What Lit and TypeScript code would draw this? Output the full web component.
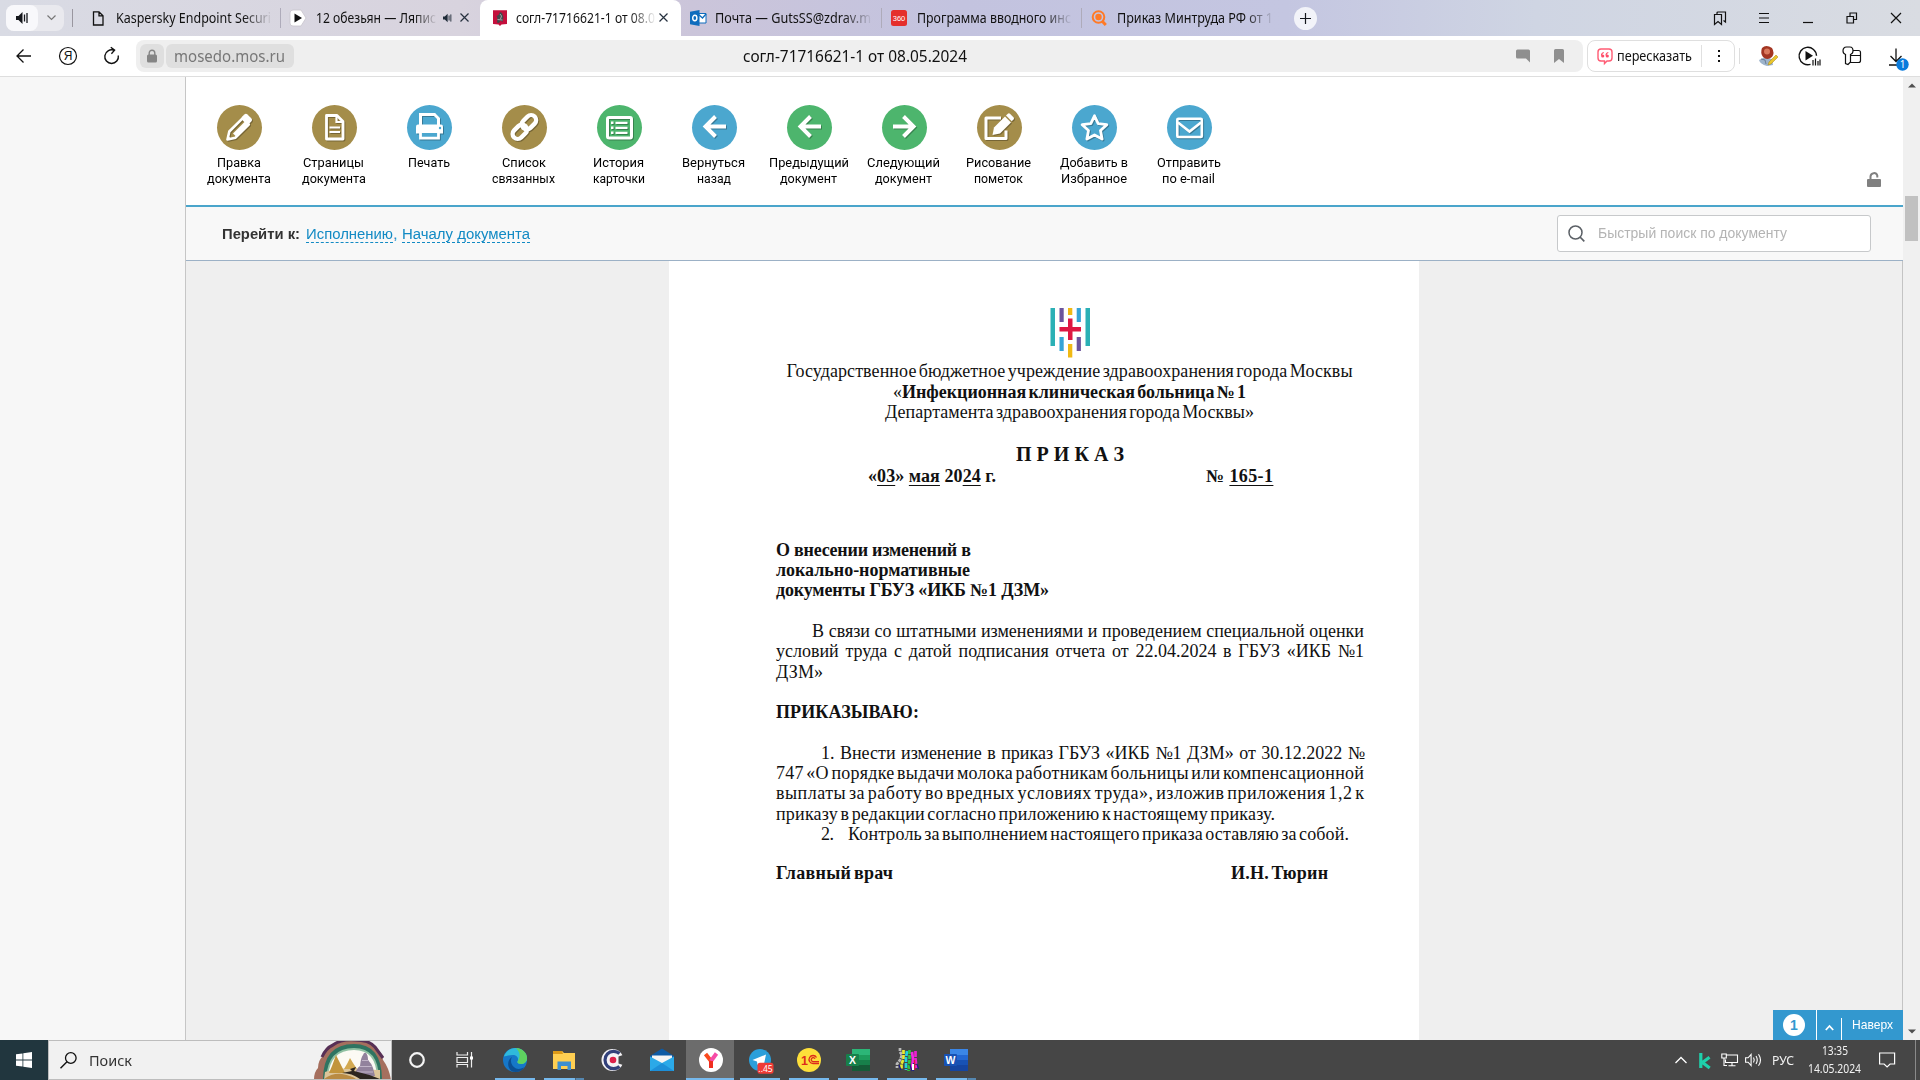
import { LitElement, html, svg, css, nothing } from "lit";
import { customElement, property } from "lit/decorators.js";

/** A single line of text fitted to a given width by scale, letter spacing or word spacing. */
@customElement("fit-text")
class FitText extends LitElement {
  @property({ type: Number }) w = 0;
  @property() mode: "scale" | "space" | "word" = "scale";
  static styles = css`
    :host { display: inline-block; white-space: pre; text-align: left; flex: none; }
    span { display: inline-block; transform-origin: 0 50%; }
  `;
  render() {
    return html`<span><slot></slot></span>`;
  }
  async firstUpdated() {
    this.fit();
    await document.fonts.ready;
    this.fit();
  }
  fit() {
    const s = this.renderRoot.querySelector("span") as HTMLElement;
    s.style.transform = "none";
    s.style.letterSpacing = "0px";
    if (this.mode === "word") s.style.wordSpacing = "0px";
    const nat = s.getBoundingClientRect().width;
    this.style.width = `${this.w}px`;
    if (!nat) return;
    const text = this.textContent || "";
    if (this.mode === "space") {
      s.style.letterSpacing = `${(this.w - nat) / Math.max(1, text.length - 1)}px`;
    } else if (this.mode === "word") {
      s.style.wordSpacing = `${(this.w - nat) / Math.max(1, text.split(" ").length - 1)}px`;
    } else {
      s.style.transform = `scaleX(${this.w / nat})`;
    }
  }
}

const fit = (text: string, w: number) => html`<fit-text .w=${w}>${text}</fit-text>`;
const sp = (content: unknown, w: number) => html`<fit-text .w=${w} mode="space">${content}</fit-text>`;
const tight = (content: unknown, w: number) => html`<fit-text class="tight" .w=${w} mode="space">${content}</fit-text>`;
const word = (content: unknown, w: number) => html`<fit-text .w=${w} mode="word">${content}</fit-text>`;

/* ---------- toolbar glyphs, 45x45 box ---------- */
const toolIcons: Record<string, unknown> = {
  pencil: svg`<path d="M10.500 34.500l1.800-8 13.200-13.200 6.200 6.200-13.200 13.200z" fill="none" stroke="#fff" stroke-width="2.600" stroke-linejoin="round"/><path d="M24.500 12.300l2.800-2.800q1.600-1.400 3.200 0l3.800 3.800q1.400 1.600 0 3.200l-2.800 2.800z" fill="#fff"/><path d="M17.500 30l12-12" stroke="#fff" stroke-width="4.200"/><path d="M9.800 35l1-4.500 3.500 3.500z" fill="#fff"/>`,
  pages: svg`<path d="M14.500 10.500h10.500l6 6v17.500h-16.500z" fill="none" stroke="#fff" stroke-width="2.800" stroke-linejoin="round"/><path d="M24.500 11v6h6.500M17.500 22.500h10.500M17.500 27h10.500" fill="none" stroke="#fff" stroke-width="2.200"/>`,
  print: svg`<path d="M13.500 20v-10.500h14l4 4v6.500" fill="none" stroke="#fff" stroke-width="3"/><path d="M11 19.500h23q2 0 2 2v7h-27v-7q0-2 2-2z" fill="#fff"/><path d="M13.500 26.500h18v6.700h-18z" fill="#4ba7cf" stroke="#fff" stroke-width="2.800"/><circle cx="33" cy="23" r="1.200" fill="#4ba7cf"/>`,
  link: svg`<g fill="none" stroke="#fff" stroke-width="4.400"><rect x="-8" y="-5" width="16" height="10" rx="5" transform="translate(17.800 26.800) rotate(-45)"/><rect x="-8" y="-5" width="16" height="10" rx="5" transform="translate(27 17.200) rotate(-45)"/></g>`,
  list: svg`<rect x="10.500" y="12.500" width="24" height="20.500" rx="1.500" fill="none" stroke="#fff" stroke-width="3"/><path d="M18.500 17.800h12M18.500 22.800h12M18.500 27.800h12" stroke="#fff" stroke-width="2.200"/><path d="M14 17.800h2.500M14 22.800h2.500M14 27.800h2.500" stroke="#fff" stroke-width="2.500"/>`,
  left: svg`<path d="M34 21.500h-20M23.500 11.500l-10 10 10 10" fill="none" stroke="#fff" stroke-width="4"/>`,
  right: svg`<path d="M11 21.500h20M21.500 11.500l10 10-10 10" fill="none" stroke="#fff" stroke-width="4"/>`,
  draw: svg`<path d="M24 13h-15v20.500h20v-8" fill="none" stroke="#fff" stroke-width="3" stroke-linejoin="round"/><path d="M15.500 30l1.500-7.500 11-11 6 6-11 11z" fill="#fff"/><path d="M29 10.500l1.800-1.800q1-1 2.200 0l3.500 3.500q1 1.200 0 2.200l-1.800 1.800z" fill="#fff"/>`,
  star: svg`<path d="M22.500 10.800l3.700 7.800 8.600 1.100-6.300 5.900 1.600 8.400-7.600-4.100-7.600 4.100 1.600-8.400-6.300-5.900 8.600-1.100z" fill="none" stroke="#fff" stroke-width="2.800" stroke-linejoin="round"/>`,
  mail: svg`<rect x="10.300" y="13.800" width="24.500" height="18.200" rx="1" fill="none" stroke="#fff" stroke-width="2.600"/><path d="M11 17.500l11.500 9 11.500-9" fill="none" stroke="#fff" stroke-width="2.600"/>`,
};

const tools: [string, string, [string, number][]][] = [
  ["pencil", "gold", [["Правка", 44], ["документа", 64]]],
  ["pages", "gold", [["Страницы", 61], ["документа", 64]]],
  ["print", "blue", [["Печать", 42]]],
  ["link", "gold", [["Список", 44], ["связанных", 63]]],
  ["list", "green", [["История", 51], ["карточки", 52]]],
  ["left", "blue", [["Вернуться", 63], ["назад", 34]]],
  ["left", "green", [["Предыдущий", 80], ["документ", 57]]],
  ["right", "green", [["Следующий", 73], ["документ", 57]]],
  ["draw", "gold", [["Рисование", 65], ["пометок", 49]]],
  ["star", "blue", [["Добавить в", 68], ["Избранное", 66]]],
  ["mail", "blue", [["Отправить", 64], ["по e-mail", 53]]],
];

/* ---------- tab favicons, 16x16 ---------- */
const icon = (w: number, h: number, body: unknown, cls = "") =>
  html`<svg class="ic ${cls}" width=${w} height=${h} viewBox="0 0 ${w} ${h}">${body}</svg>`;

const favs = {
  file: svg`<path d="M3.500 1.800h5.500l4 4v9.200h-9.500zM9 1.800v4h4" fill="none" stroke="#111" stroke-width="1.300"/>`,
  play: svg`<path d="M3 0h8l5 8-5 8h-8q-3 0-3-3v-10q0-3 3-3z" fill="#fff" stroke="#c8c4cc" stroke-width=".8"/><path d="M4.500 3.500l7.500 4.500-7.500 4.500z" fill="#111"/>`,
  moscow: svg`<path d="M1 .3h14v13.700l-5.500 .5-1.500 1.500-1.500-1.500-5.500-.5z" fill="#c40f3c"/><path d="M5 12.500l.5-4-1-2.500 2-1 1.500-3 2 1 1.500 4-1 5-2-1.500-1.500 2.500z" fill="#43484c"/><path d="M8 4l1.500 2-1 3M5.500 9.500l5 .5" stroke="#a9b3b5" fill="none" stroke-width=".9"/>`,
  outlook: svg`<path d="M8 3.500h8v9.500h-8z" fill="#fff" stroke="#0f6cbd"/><path d="M8 4l4.500 4 3.500-4" fill="none" stroke="#0f6cbd" stroke-width="1.300"/><path d="M0 1.800l9.500-1.800v16l-9.500-1.800z" fill="#0f6cbd"/><ellipse cx="4.800" cy="8" rx="2.100" ry="2.700" fill="none" stroke="#fff" stroke-width="1.400"/>`,
  n360: svg`<rect width="16" height="16" rx="2.500" fill="#e52f2b"/><text x="8" y="10.800" text-anchor="middle" font-family="Liberation Sans" font-size="7.500" fill="#fff">360</text>`,
  lens: svg`<circle cx="7.500" cy="7" r="5.800" fill="none" stroke="#ff7a26" stroke-width="2"/><circle cx="7.500" cy="7" r="3.200" fill="#ff7a26"/><path d="M11 11l3.800 4" stroke="#ff7a26" stroke-width="3"/>`,
};
const tabs = [
  { fav: favs.file, text: "Kaspersky Endpoint Securi", w: 155, cls: "" },
  { fav: favs.play, text: "12 обезьян — Ляпис", w: 120, cls: "", sound: true, close: true },
  { fav: favs.moscow, text: "согл-71716621-1 от 08.0", w: 139, cls: "active", close: true },
  { fav: favs.outlook, text: "Почта — GutsSS@zdrav.m", w: 156, cls: "first" },
  { fav: favs.n360, text: "Программа вводного инс", w: 154, cls: "" },
  { fav: favs.lens, text: "Приказ Минтруда РФ от 1", w: 156, cls: "" },
];

/* ---------- taskbar ---------- */
const office = (dark: string, mid: string, light: string, deep: string, ch: string) => svg`
  <path d="M6 1h18v6h-18z" fill=${light}/><path d="M6 7h18v5h-18z" fill=${mid}/><path d="M6 12h18v5h-18z" fill=${dark}/><path d="M6 17h18v6h-18z" fill=${deep}/>
  <rect x="0" y="6" width="13" height="12" rx="1" fill=${dark}/>
  <text x="6.500" y="16" text-anchor="middle" font-family="Liberation Sans" font-weight="700" font-size="10.500" fill="#fff">${ch}</text>`;

const apps: { i: unknown; bar?: string; on?: boolean }[] = [
  { i: svg`<circle cx="12" cy="12" r="6.800" fill="none" stroke="#f4f4f4" stroke-width="2.200"/>` },
  { i: svg`<path d="M3.500 4v3h10.500v-3M3.500 19.500v-3h10.500v3M3.500 9.500h10.500v5h-10.500zM18 4v15.500" transform="translate(-.5 0)" fill="none" stroke="#eee" stroke-width="1.200"/><rect x="16" y="8.500" width="3" height="3" fill="#fff"/>` },
  { i: svg`<circle cx="12" cy="12" r="12" fill="#1677c8"/><path d="M.8 8.500c2-5 6.200-8.500 11.500-8.500 7 0 11.700 5 11.700 10 0 4-3 6-6 6-2.500 0-4-1-3.500-2.500 1.500-2.500 0-6.500-4.500-6.500-4 0-7.500 1-9.200 1.500z" fill="#2fb9dc"/><path d="M13 .1c6.500.4 11 5 11 9.900 0 4-3 6-6 6-2.500 0-4-1-3.500-2.500 3-4 3-9-1.500-13.400z" fill="#5fd25f"/><path d="M9 9c-2.500 4-.5 9.500 4 11.500 3 1 6.500 0 8.500-1.500-3 5-9 6.200-13 4-5-4-4-11.500.5-14z" fill="#0c4f93"/>`, bar: "full" },
  { i: svg`<path d="M1 3h9l2 2h11v16h-22z" fill="#ffcf52"/><path d="M1 3h9l1 3h-10z" fill="#dd9a18"/><path d="M5.500 22v-8.500h13.500v8.500h-3.500v-4h-6.500v4z" fill="#3d8fd0"/>`, bar: "split" },
  { i: svg`<circle cx="11.500" cy="12" r="11" fill="#f4f2f5"/><path d="M18.500 5.500a8.700 8.700 0 1 0 0 13" fill="none" stroke="#32407a" stroke-width="3.200"/><circle cx="12" cy="12" r="3.300" fill="#dc2049"/><path d="M17.500 8.500l6-2v11l-6-2z" fill="#474747"/>` },
  { i: svg`<path d="M0 8l12-7.500 12 7.500v2h-24z" fill="#0e5ba5"/><path d="M2 7.500h20v10h-20z" fill="#f5f5f5"/><path d="M0 8.500l12 6.500 12-6.500v14.500h-24z" fill="#2ba9e8"/><path d="M0 23l12-8 12 8z" fill="#1d8fd8"/>` },
  { i: svg`<circle cx="12" cy="12" r="12" fill="#fff"/><path d="M12 20v-7l-5.500-7" fill="none" stroke="#fb4a1e" stroke-width="4"/><path d="M12 13l5.500-7.500" stroke="#f64ba7" stroke-width="4"/><path d="M12 20v-7" stroke="#f02e20" stroke-width="4"/>`, bar: "wide", on: true },
  { i: svg`<circle cx="12" cy="12" r="11" fill="#2b9fda"/><path d="M4.500 12l13.500-5.500-2.500 12-4-3.500-2 2-.5-3.500z" fill="#fff"/><rect x="9.500" y="14.800" width="16" height="11" rx="2.500" fill="#ef3b36"/><text x="17.500" y="23.500" text-anchor="middle" font-family="Noto Sans" font-size="8.500" fill="#fff">..45</text>`, bar: "full" },
  { i: svg`<circle cx="12" cy="12" r="12" fill="#fddf3a"/><text x="4" y="16.500" font-family="Liberation Sans" font-weight="700" font-size="12.500" fill="#dd2b1c">1</text><path d="M19.500 9.500a4 4 0 1 0-3.500 6h6M18 10.800a2 2 0 1 0-2 2.900h6" fill="none" stroke="#dd2b1c" stroke-width="1.300"/>`, bar: "full" },
  { i: office("#17804a", "#1d9c5c", "#2cb677", "#155b37", "X"), bar: "full" },
  { i: svg`<g fill="none" stroke-width="2.700"><path d="M5 0v4l2 3-2 5-3 4v4" stroke="#b9b9b9" stroke-dasharray="3 1"/><path d="M8.500 2v9l-2 5v5" stroke="#e9e930" stroke-dasharray="4 1"/><path d="M12 3l-1 7v12" stroke="#22cfe0" stroke-dasharray="5 1"/><path d="M14.500 2v10l-1 11" stroke="#2fc642" stroke-dasharray="4 1"/><path d="M17 4l1 7-1 11" stroke="#f22be4"/><path d="M20.500 3v8l1 9" stroke="#ef1fd0" stroke-dasharray="6 1"/><path d="M19.500 12v10" stroke="#e01b3c" stroke-width="1.500"/></g><path d="M15 17l2 6M18.500 15v8M22 16l1.500 5M4 17l2 5" stroke="#1c1c8c" stroke-width="1.200" fill="none"/><path d="M17 16h2v6h-2z" fill="#fff"/>`, bar: "full" },
  { i: office("#1852b4", "#2367d2", "#3b86e6", "#1545a0", "W"), bar: "split2" },
];

@customElement("app-root")
class AppRoot extends LitElement {
  static styles = css`
    :host { display: flex; flex-direction: column; width: 1920px; height: 1080px; overflow: hidden; background: #fff; color: #111; font-family: "Liberation Sans", sans-serif; }
    * { box-sizing: border-box; }
    svg { display: block; flex: none; overflow: visible; }

    /* tab strip */
    .strip { height: 36px; flex: none; display: flex; align-items: center; background: linear-gradient(90deg, #d9dbe4 0, #d8d3de 24%, #cbc5da 36%, #c3c3df 50%, #c4c6e1 67%, #cfd5e3 80%, #d9dce2 100%); font: 14px "Noto Sans", sans-serif; }
    .media { display: flex; align-items: center; width: 58px; height: 26px; margin-left: 6px; border-radius: 8px; background: #e9e9ee; }
    .media .on { width: 32px; height: 26px; border-radius: 8px; background: #f8f8fb; display: grid; place-items: center; }
    .media .more { flex: 1; display: grid; place-items: center; }
    .vsep { width: 1px; height: 18px; background: #99969f; margin-left: 8px; }
    .tabs { display: flex; height: 36px; margin-left: 7px; }
    .tab { width: 200px; display: flex; align-items: center; padding-left: 10px; position: relative; padding-bottom: 1px; flex: none; }
    .tab + .tab::before { content: ""; position: absolute; left: 0; top: 8px; width: 1px; height: 20px; background: #aeabba; }
    .tab .txt { margin-left: 10px; flex: none; -webkit-mask-image: linear-gradient(90deg, #000 82%, transparent 101%); }
    .tab .snd { margin-left: 7px; }
    .tab .x { margin-left: auto; margin-right: 12px; }
    .tab .snd + .x { margin-left: 7px; margin-right: 0; }
    .tab.active { background: #fff; border-radius: 8px 8px 0 0; width: 201px; padding-left: 12px; }
    .tab.active .txt { margin-left: 8px; }
    .tab.active .x { margin-right: 13px; }
    .tab.active::before, .tab.first::before { display: none; }
    .tab.first { padding-left: 9px; }
    .tab.first .txt { margin-left: 9px; }
    .plus { width: 23px; height: 23px; border-radius: 50%; background: #f2f3f9; display: grid; place-items: center; margin-left: 13px; }
    .win { display: flex; align-items: center; margin-left: auto; margin-right: 16px; gap: 28px; }

    /* address row */
    .addr { height: 41px; flex: none; display: flex; align-items: center; border-bottom: 1px solid #dedede; font: 15px "Noto Sans", sans-serif; background: #fff; }
    .navs { width: 136px; display: flex; align-items: center; padding-left: 15px; gap: 26px; }
    .field { width: 1447px; height: 32px; border-radius: 8px; background: #efefef; display: flex; align-items: center; padding-left: 4px; }
    .chip { height: 24px; border-radius: 6px; background: #dfdfdf; display: grid; place-items: center; }
    .lock { width: 24px; }
    .dom { width: 128px; margin-left: 2px; color: #777; font-size: 16px; padding-right: 2px; }
    .ttl { margin-left: 449px; font-size: 16px; }
    .fic { margin-left: auto; display: flex; gap: 22px; margin-right: 18px; }
    .retell { margin-left: 4px; width: 148px; height: 32px; border: 1px solid #dfdfdf; border-radius: 8px; display: flex; align-items: center; padding-left: 9px; font-size: 14px; }
    .retell fit-text { margin: 0 0 2px 4px; }
    .retell .s { width: 1px; height: 22px; background: #e0e0e0; margin: 0 15px 0 9px; }
    .addr .sep { width: 1px; height: 16px; background: #ddd; margin: 0 18px 0 4px; }
    .exts { display: flex; align-items: center; }
    .exts svg + svg { margin-left: 21px; }
    .exts svg + svg:last-child { margin-left: 25px; margin-top: 1px; }

    /* body */
    .body { flex: none; height: 963px; display: flex; }
    .side { width: 186px; background: #f7f7f7; border-right: 1px solid #c6c6c6; }
    .main { width: 1717px; display: flex; flex-direction: column; }
    .tools { height: 130px; flex: none; display: flex; border-bottom: 2px solid #4aa5cb; background: #fff; padding: 28px 0 0 6px; }
    .tool { width: 95.050px; display: flex; flex-direction: column; align-items: center; font: 13.500px/16px Roboto, "Liberation Sans", sans-serif; color: #000; }
    .tool fit-text { margin-right: 2px; }
    .disc { width: 45px; height: 45px; border-radius: 50%; margin-bottom: 4px; }
    .disc svg { filter: drop-shadow(1px 1px 0 rgba(0, 0, 0, .28)); }
    .gold { background: #a48d4a; }
    .blue { background: #4ba7cf; }
    .green { background: #4db56d; }
    .unlock { margin: 67px 22px 0 auto; }
    .jump { height: 54px; flex: none; background: #f8f8f8; border-bottom: 1px solid #9cb1c6; display: flex; align-items: center; padding: 0 32px 0 36px; font-size: 15.500px; }
    .jump b { color: #333; }
    .jump a { color: #128ac4; border-bottom: 1px dashed #128ac4; line-height: 16px; margin-left: 5px; height: 17px; margin-top: 1px; }
    .jump i { font-style: normal; color: #128ac4; margin-right: 1px; }
    .jump b + a { margin-left: 6px; }
    .jump i + a { margin-left: 4px; }
    .find { margin-left: auto; width: 314px; height: 37px; background: #fff; border: 1px solid #c7c9cb; border-radius: 3px; display: flex; align-items: center; padding-left: 10px; gap: 13px; color: #b4b4b4; font-size: 14.500px; }
    .find fit-text { margin-bottom: 1px; }
    .desk { flex: 1; background: #efefef; border-right: 1px solid #c4c4c4; display: flex; align-items: flex-start; position: relative; }
    .page { margin-left: 483px; width: 750px; height: 779px; background: #fff; padding: 47px 0 0 107px; display: flex; flex-direction: column; font: 18px/20.300px "Liberation Serif", serif; color: #111; }
    .page > * { width: 588px; flex: none; }
    .tight { word-spacing: -2.200px; }
    .logo { height: 53.300px; display: flex; justify-content: center; }
    .head { display: flex; flex-direction: column; align-items: center; height: 61px; padding-right: 1px; }
    .order { display: flex; justify-content: center; margin-top: 19.500px; height: 24px; font-size: 20px; line-height: 24px; font-weight: 700; }
    .date { display: flex; justify-content: space-between; padding: 0 91px 0 92px; font-weight: 700; height: 20.300px; margin-top: .5px; }
    .date u { text-underline-offset: 3px; text-decoration-thickness: 1px; }
    .subj { margin-top: 53.200px; font-weight: 700; display: flex; flex-direction: column; }
    .para { margin-top: 20.300px; display: flex; flex-direction: column; }
    .para.cmd { font-weight: 700; }
    .para.in1 > :first-child { margin-left: 36px; }
    .para.in2 > :first-child { margin-left: 45px; }
    .num2 { display: flex; padding-left: 45px; gap: 14px; }
    .sign { display: flex; justify-content: space-between; padding-right: 36px; margin-top: 19px; font-weight: 700; }
    .top { position: absolute; right: -1px; bottom: 0; height: 30px; display: flex; background: #3398cf; color: #fff; align-items: center; font-size: 13px; }
    .top .cnt { width: 44px; height: 30px; display: grid; place-items: center; border-right: 1px solid #fff; padding-right: 1px; }
    .top .ball { width: 22px; height: 22px; border-radius: 50%; background: #fff; color: #3398cf; font: 700 14px/22px "Liberation Sans"; text-align: center; }
    .top .up { width: 25px; display: grid; place-items: center; border-right: 1px solid #fff; height: 22px; align-self: flex-end; padding-bottom: 4px; }
    .top fit-text { margin: 0 10px 2px 10px; }
    .scroll { width: 17px; background: #f0f0f0; display: flex; flex-direction: column; align-items: center; justify-content: space-between; padding: 6px 0; position: relative; }
    .thumb { position: absolute; left: 2px; top: 119px; width: 13px; height: 45px; background: #c1c1c1; }

    /* taskbar */
    .task { flex: none; height: 40px; display: flex; background: #464646; color: #f2f2f2; font-family: "Noto Sans", sans-serif; }
    .start { width: 48px; background: #21363e; display: grid; place-items: center; }
    .search { width: 344px; background: #f1f1f1; border: 1px solid #bdbdbd; display: flex; align-items: center; color: #333; font-size: 15px; padding-left: 11px; overflow: hidden; }
    .search fit-text { margin-left: 12px; }
    .search .art { margin-left: auto; }
    .app { width: 49px; display: grid; place-items: center; position: relative; }
    .app.on { background: linear-gradient(#6c6c6c, #6c6c6c) no-repeat 0 0 / 48px 100%; }
    .app::after { position: absolute; bottom: 0; left: 5px; width: 40px; height: 2px; background: #76b9ed; }
    .app.full::after { content: ""; }
    .app.wide::after { content: ""; left: 0; width: 48px; }
    .app.split::after, .app.split2::after { content: ""; background: linear-gradient(90deg, #76b9ed 31px, #464646 31px, #5587b0 32px); }
    .tray { margin-left: auto; display: flex; align-items: center; }
    .tray .k { margin-left: 12px; }
    .tray .net { margin-left: 10px; }
    .tray .vol { margin-left: 7px; }
    .clock { margin: 0 18px 1px 14px; width: 53px; display: flex; flex-direction: column; align-items: center; font-size: 12.500px; line-height: 18px; }
    .lang { margin-left: 10px; font-size: 13px; }
    .peek { width: 1px; height: 40px; background: #8a8a8a; margin: 0 4px 0 20px; }
  `;

  speaker(c: string) {
    return svg`<path d="M0 5h2.500l4-4v12l-4-4h-2.500z" fill=${c}/><path d="M8.500 3.500v7M11 2v10" stroke=${c} stroke-width="1.300"/>`;
  }

  strip() {
    return html`<div class="strip">
      <div class="media"><div class="on">${icon(12, 14, this.speaker("#15171c"))}</div>
        <div class="more">${icon(9, 6, svg`<path d="M.5.5l4 4 4-4" fill="none" stroke="#777" stroke-width="1.200"/>`)}</div></div>
      <div class="vsep"></div>
      <div class="tabs">${tabs.map((t: any) => html`<div class="tab ${t.cls}">
        ${icon(16, 16, t.fav)}
        <div class="txt">${fit(t.text, t.w)}</div>
        ${t.sound ? html`<div class="snd"><svg width="10" height="10" viewBox="0 0 14 14">${this.speaker("#1f2b38")}</svg></div>` : nothing}
        ${t.close ? html`<div class="x">${icon(9, 9, svg`<path d="M.5.5l8 8M8.500.5l-8 8" stroke="#26313f" stroke-width="1.200"/>`)}</div>` : nothing}
      </div>`)}</div>
      <div class="plus">${icon(11, 11, svg`<path d="M5.500 0v11M0 5.500h11" stroke="#14171d" stroke-width="1.200"/>`)}</div>
      <div class="win">
        ${icon(16, 14, svg`<path d="M2.500 3.500h7v10l-3.500-3-3.500 3zM5 3.500v-1.500q0-1 1-1h7.500v10l-2-1.500" fill="none" stroke="#111" stroke-width="1.200"/>`)}
        ${icon(16, 12, svg`<path d="M3 1.500h10M3 6h10M3 10.500h10" stroke="#111" stroke-width="1.200"/>`)}
        ${icon(16, 12, svg`<path d="M3 10.500h10" stroke="#111" stroke-width="1.200"/>`)}
        ${icon(16, 12, svg`<path d="M3 4.500h6.500v6.500h-6.500zM6 4.500v-3.500h6.500v6.500h-3" fill="none" stroke="#111" stroke-width="1.200"/>`)}
        ${icon(16, 12, svg`<path d="M3 1l10 10M13 1l-10 10" stroke="#111" stroke-width="1.200"/>`)}
      </div>
    </div>`;
  }

  addr() {
    return html`<div class="addr">
      <div class="navs">
        ${icon(18, 16, svg`<path d="M16 8h-14M8.500 1.500l-6.500 6.500 6.500 6.500" fill="none" stroke="#111" stroke-width="1.300"/>`)}
        ${icon(18, 18, svg`<circle cx="9" cy="9" r="8.500" fill="none" stroke="#111" stroke-width="1.200"/><text x="9" y="13.200" text-anchor="middle" font-family="Liberation Sans" font-size="12" fill="#111">Я</text>`)}
        ${icon(18, 18, svg`<path d="M15.300 8.500a6.800 6.800 0 1 1-4.500-5.300M7.800 .2l3.800 3-3.200 3.600" fill="none" stroke="#111" stroke-width="1.400"/>`)}
      </div>
      <div class="field">
        <div class="chip lock">${icon(12, 14, svg`<rect x="1" y="5.500" width="10" height="8" rx="1.500" fill="#858585"/><path d="M3.200 6v-2a2.800 2.800 0 0 1 5.600 0v2" fill="none" stroke="#858585" stroke-width="1.400"/>`)}</div>
        <div class="chip dom">${fit("mosedo.mos.ru", 111)}</div>
        <div class="ttl">${fit("согл-71716621-1 от 08.05.2024", 224)}</div>
        <div class="fic">
          ${icon(16, 14, svg`<path d="M2.500 .5h11q1.500 0 1.500 1.500v11.500l-4-4h-8.500q-1.500 0-1.500-1.500v-6q0-1.500 1.500-1.500z" fill="#8f8f8f"/>`)}
          ${icon(12, 14, svg`<path d="M2.500 0h7q1.500 0 1.500 1.500v12.500l-5-4-5 4v-12.500q0-1.500 1.500-1.500z" fill="#8f8f8f"/>`)}
        </div>
      </div>
      <div class="retell">
        ${icon(16, 16, svg`<path d="M4 1h8q3 0 3 3v6q0 3-3 3h-2l-2.500 2.500v-2.500h-3.500q-3 0-3-3v-6q0-3 3-3z" fill="none" stroke="#ff5c74" stroke-width="1.400"/><path d="M4.500 7.500q0-2.500 2.300-3M9 7.500q0-2.500 2.300-3" fill="none" stroke="#ff4d68" stroke-width="1.200"/><circle cx="5.700" cy="8" r="1.600" fill="#ff4d68"/><circle cx="10.300" cy="8" r="1.600" fill="#ff4d68"/>`)}
        ${fit("пересказать", 75)}
        <div class="s"></div>
        ${icon(4, 14, svg`<path d="M1 1h2v2h-2zM1 6h2v2h-2zM1 11h2v2h-2z" fill="#111"/>`)}
      </div>
      <div class="sep"></div>
      <div class="exts">
        ${icon(20, 20, svg`<path d="M1 14l6-3 7 2 1 6-6 1q-7-2-8-6z" fill="#9db4cc"/><path d="M4 2q4-4 10 0 3 5 0 9-5 4-9 0-3-4-1-9z" fill="#a33522"/><circle cx="9" cy="5.500" r="3" fill="#d9785c"/><path d="M3 13l4 1 1 4" stroke="#6d7f94" fill="none"/><path d="M10 19l1-3 7-7 2 2-7 7z" fill="#eac62c" stroke="#a98516" stroke-width=".5"/>`)}
        ${icon(22, 20, svg`<path d="M11.500 18.300a8.700 8.700 0 1 1 6-8.500" fill="none" stroke="#111" stroke-width="1.400"/><path d="M6.500 5l7.500 4.800-7.500 4.800z" fill="#111"/><path d="M14 14v5.500M16.500 12.500v7M19 15v4.500M21 13.500v6" stroke="#111" stroke-width="1.200"/>`)}
        ${icon(20, 20, svg`<path d="M3.500 17.500v-9q-2.500-1-2.500-3.500 0-4 3.500-4h3.500q3 0 3 4 0 2.500-2.500 3.500v7.500l-2.500 2.500zM11 4.500h5.500q2 0 2 2v8q0 2-2 2h-8M9 9.500h9.500" fill="none" stroke="#111" stroke-width="1.200"/>`)}
        ${icon(24, 20, svg`<path d="M9 1.500v13M3.500 9l5.500 5.500 5.500-5.500M2 18h8" fill="none" stroke="#111" stroke-width="1.300"/><circle cx="15.500" cy="17.500" r="6.200" fill="#0a7bdc"/><text x="15.500" y="21.300" text-anchor="middle" font-family="Noto Sans" font-size="10" fill="#fff">1</text>`)}
      </div>
    </div>`;
  }

  doc() {
    return html`<div class="page">
      <div class="logo"><svg width="40" height="50" viewBox="0 0 40 50">
        <path d="M.5 0h4.500v38h-4.500zM35.500 0h4.500v38h-4.500z" fill="#2bb0b5"/>
        <path d="M9.500 0h4.200v14h-4.200zM26.700 29h4.200v14h-4.200z" fill="#6b549d"/>
        <path d="M26.700 0h4.200v14h-4.200zM9.500 29h4.200v14h-4.200z" fill="#36a3d6"/>
        <path d="M18 0h4.300v7h-4.300zM18 36h4.300v13.500h-4.300z" fill="#f0b914"/>
        <path d="M18 10.500h4.500v8.500h8.500v4.500h-8.500v8.500h-4.500v-8.500h-8.500v-4.500h8.500z" fill="#de1743"/></svg></div>
      <div class="head">
        ${tight("Государственное бюджетное учреждение здравоохранения города Москвы", 566)}
        ${tight(html`«<b>Инфекционная клиническая больница № 1</b>`, 353)}
        ${tight("Департамента здравоохранения города Москвы»", 369)}
      </div>
      <div class="order">${sp("П Р И К А З", 108)}</div>
      <div class="date">${sp(html`«<u>03</u>» <u>мая</u> 20<u>24</u> г.`, 128)}${sp(html`№ <u>165-1</u>`, 67)}</div>
      <div class="subj">
        ${sp("О внесении изменений в", 195)}
        ${sp("локально-нормативные", 194)}
        ${sp("документы ГБУЗ «ИКБ №1 ДЗМ»", 273)}
      </div>
      <div class="para in1">
        ${word("В связи со штатными изменениями и проведением специальной оценки", 552)}
        ${word("условий труда с датой подписания отчета от 22.04.2024 в ГБУЗ «ИКБ №1", 588)}
        ${sp("ДЗМ»", 47)}
      </div>
      <div class="para cmd">${sp("ПРИКАЗЫВАЮ:", 143)}</div>
      <div class="para in2">
        ${word("1. Внести изменение в приказ ГБУЗ «ИКБ №1 ДЗМ» от 30.12.2022 №", 544)}
        ${tight("747 «О порядке выдачи молока работникам больницы или компенсационной", 588)}
        ${tight("выплаты за работу во вредных условиях труда», изложив приложения 1,2 к", 588)}
        ${tight("приказу в редакции согласно приложению к настоящему приказу.", 499)}
        <div class="num2">${sp("2.", 13)}${tight("Контроль за выполнением настоящего приказа оставляю за собой.", 501)}</div>
      </div>
      <div class="sign">${tight("Главный врач", 117)}${tight("И.Н. Тюрин", 97)}</div>
    </div>`;
  }

  render() {
    return html`
      ${this.strip()}${this.addr()}
      <div class="body">
        <div class="side"></div>
        <div class="main">
          <div class="tools">
            ${tools.map(([k, c, l]) => html`<div class="tool"><div class="disc ${c}">${icon(45, 45, toolIcons[k])}</div>${l.map(([s, w]) => fit(s, w))}</div>`)}
            <div class="unlock">${icon(14, 15, svg`<rect x="0" y="7" width="14" height="8" rx="1" fill="#808080"/><path d="M3.500 7.500v-3.200a3.500 3.500 0 0 1 6.800-.8v2" fill="none" stroke="#808080" stroke-width="2"/>`)}</div>
          </div>
          <div class="jump">
            <b>${fit("Перейти к:", 78)}</b><a>${fit("Исполнению", 87)}</a><i>,</i><a>${fit("Началу документа", 128)}</a>
            <div class="find">${icon(17, 17, svg`<circle cx="7.500" cy="7.500" r="6.500" fill="none" stroke="#5b6066" stroke-width="1.500"/><path d="M12 12l4.300 4.300" stroke="#5b6066" stroke-width="1.700"/>`)}${fit("Быстрый поиск по документу", 189)}</div>
          </div>
          <div class="desk">
            ${this.doc()}
            <div class="top"><div class="cnt"><div class="ball">1</div></div>
              <div class="up">${icon(9, 7, svg`<path d="M.8 6l3.700-4 3.700 4" fill="none" stroke="#fff" stroke-width="1.800"/>`)}</div>
              ${fit("Наверх", 41)}</div>
          </div>
        </div>
        <div class="scroll">
          ${icon(8, 5, svg`<path d="M0 4.500l4-4 4 4z" fill="#505050"/>`)}
          <div class="thumb"></div>
          ${icon(8, 5, svg`<path d="M0 .5h8l-4 4z" fill="#505050"/>`)}
        </div>
      </div>
      <div class="task">
        <div class="start">${icon(16, 16, svg`<path d="M0 2.300l6.500-.9v6.200h-6.500zM7.300 1.300l8.700-1.300v7.600h-8.700zM0 8.400h6.500v6.200l-6.500-.9zM7.300 8.400h8.700v7.600l-8.700-1.300z" fill="#fff"/>`)}</div>
        <div class="search">
          ${icon(17, 17, svg`<circle cx="10.800" cy="6" r="5.300" fill="none" stroke="#111" stroke-width="1.300"/><path d="M7 9.800l-6.500 6.500" stroke="#111" stroke-width="1.500"/>`)}
          ${fit("Поиск", 43)}
          <svg class="art" width="77" height="38" viewBox="0 0 77 38">
            <path d="M0 39q0-8 4-12 0-8 6-13 2-7 9-10 8-6 22-5 14 0 20 7 7 5 8 13 6 8 8 20z" fill="#a56f5e"/>
            <path d="M8 16q4-9 11-12 8-6 22-5 14 0 20 7l8 11" fill="none" stroke="#573056" stroke-width="3"/>
            <path d="M9 39q0-36 31-36 28 0 28 36z" fill="#2f7461"/><path d="M12 39q1-32 28-32 25 0 25 32z" fill="#8fc0a2"/>
            <path d="M14 36q2-27 26-27 22 0 23 27z" fill="#fcfaf4"/>
            <path d="M11 31q14-5 29-3l26 1v10h-56z" fill="#dcc59a"/>
            <path d="M22 14l3 6 3 6 3 6h-16l3-7z" fill="#c2953c"/><path d="M36 17l3 5 4 6h-13l3-5z" fill="#d3a951"/>
            <path d="M52 12q2 2 2 7 4 4 5 8l2 8q-10 2-20 0 1-8 5-10 1-9 3-11 1-3 3-2z" fill="#92829c"/><path d="M48 19.500h7M45.500 25.500h12M43 31h16" stroke="#c2b5c8"/>
            <path d="M28 32q10 0 18 6h20q-12-5-26-8l2-4-6 2 2 2z" fill="#2c2620"/><path d="M10 38q8-6 18-5 10 2 14 5z" fill="#b98b43"/></svg>
        </div>
        ${apps.map((a) => html`<div class="app ${a.bar ?? ""} ${a.on ? "on" : ""}">${icon(24, 24, a.i)}</div>`)}
        <div class="tray">
          ${icon(12, 8, svg`<path d="M.5 7l5.500-5.500 5.500 5.500" fill="none" stroke="#fff" stroke-width="1.300"/>`)}
          <svg class="k" width="12" height="15" viewBox="0 0 12 15"><path d="M1.800 0v15M10.500 4.300l-7 5.200 7.200 5.500" fill="none" stroke="#1fd0ab" stroke-width="3.200"/></svg>
          <svg class="net" width="17" height="14" viewBox="0 0 17 14"><path d="M5.500 2h11v7.500h-12v-3M11 9.500v3M7.500 12.800h7M.8 1h4.500v4h-4.500zM3 5v7.500h3" fill="none" stroke="#fff" stroke-width="1.100"/></svg>
          <svg class="vol" width="17" height="14" viewBox="0 0 17 14"><path d="M.6 4.800h2.500l3-3.300v11l-3-3.300h-2.500zM8.500 4.500q1.500 2.500 0 5M11 3q2.500 4 0 8M13.500 1.200q4 5.800 0 11.600" fill="none" stroke="#fff" stroke-width="1.100"/></svg>
          <div class="lang">${fit("РУС", 22)}</div>
          <div class="clock">${fit("13:35", 26)}${fit("14.05.2024", 53)}</div>
          ${icon(16, 16, svg`<path d="M.6 1h15v11h-4.500l-3 3-3-3h-4.500z" fill="none" stroke="#fff" stroke-width="1.200"/>`)}
          <div class="peek"></div>
        </div>
      </div>`;
  }
}
